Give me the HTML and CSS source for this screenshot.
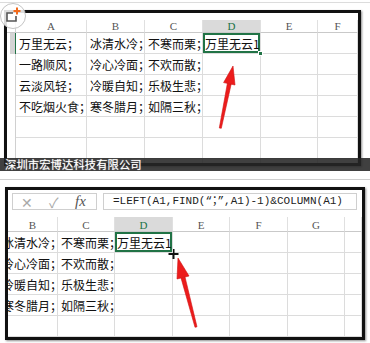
FILE: index.html
```html
<!DOCTYPE html>
<html lang="zh-cn">

<head>
  <meta charset="UTF-8">
  <meta name="viewport" content="width=device-width, initial-scale=1.0">
  <title>LEFT FIND COLUMN</title>
  <link rel="stylesheet" href="styles.css">
</head>

<body>
  <div class="rule first"></div>

  <div class="top-wrap">
    <div class="shot top-shot">
      <div class="top-space"></div>
      <div class="sheet sheet-top">
        <div class="hd corner"></div>
        <div class="hd">A</div>
        <div class="hd">B</div>
        <div class="hd">C</div>
        <div class="hd sel">D</div>
        <div class="hd">E</div>
        <div class="hd">F</div>

        <div class="rh active"></div>
        <div class="c">万里无云；</div>
        <div class="c">冰清水冷；</div>
        <div class="c">不寒而栗；</div>
        <div class="c cur">万里无云1<span class="handle"></span></div>
        <div class="c"></div>
        <div class="c"></div>

        <div class="rh"></div>
        <div class="c">一路顺风；</div>
        <div class="c">冷心冷面；</div>
        <div class="c spill">不欢而散；</div>
        <div class="c"></div>
        <div class="c"></div>
        <div class="c"></div>

        <div class="rh"></div>
        <div class="c">云淡风轻；</div>
        <div class="c">冷暖自知；</div>
        <div class="c spill">乐极生悲；</div>
        <div class="c"></div>
        <div class="c"></div>
        <div class="c"></div>

        <div class="rh"></div>
        <div class="c">不吃烟火食；</div>
        <div class="c">寒冬腊月；</div>
        <div class="c spill">如隔三秋；</div>
        <div class="c"></div>
        <div class="c"></div>
        <div class="c"></div>

        <div class="rh"></div>
        <div class="c"></div>
        <div class="c"></div>
        <div class="c"></div>
        <div class="c"></div>
        <div class="c"></div>
        <div class="c"></div>

        <div class="rh"></div>
        <div class="c"></div>
        <div class="c"></div>
        <div class="c"></div>
        <div class="c"></div>
        <div class="c"></div>
        <div class="c"></div>

        <div class="rh"></div>
        <div class="c"></div>
        <div class="c"></div>
        <div class="c"></div>
        <div class="c"></div>
        <div class="c"></div>
        <div class="c"></div>
      </div>
    </div>
    <div class="caption">深圳市宏博达科技有限公司</div>
  </div>

  <div class="rule second"></div>

  <div class="shot bottom-shot">
    <div class="fbar">
      <div class="fbtns">
        <span class="fb-x">&#x2715;</span>
        <span class="fb-ok">&#x2713;</span>
        <span class="fb-fx">fx</span>
      </div>
      <div class="fbox">=LEFT(A1,FIND(“；”,A1)-1)&amp;COLUMN(A1)</div>
    </div>
    <div class="sheet sheet-bottom">
      <div class="hd">B</div>
      <div class="hd">C</div>
      <div class="hd sel">D</div>
      <div class="hd">E</div>
      <div class="hd">F</div>
      <div class="hd">G</div>
      <div class="hd"></div>

      <div class="c right"><span>冰清水冷；</span></div>
      <div class="c">不寒而栗；</div>
      <div class="c cur">万里无云1</div>
      <div class="c"></div>
      <div class="c"></div>
      <div class="c"></div>
      <div class="c"></div>

      <div class="c right"><span>冷心冷面；</span></div>
      <div class="c">不欢而散；</div>
      <div class="c"></div>
      <div class="c"></div>
      <div class="c"></div>
      <div class="c"></div>
      <div class="c"></div>

      <div class="c right"><span>冷暖自知；</span></div>
      <div class="c">乐极生悲；</div>
      <div class="c"></div>
      <div class="c"></div>
      <div class="c"></div>
      <div class="c"></div>
      <div class="c"></div>

      <div class="c right"><span>寒冬腊月；</span></div>
      <div class="c">如隔三秋；</div>
      <div class="c"></div>
      <div class="c"></div>
      <div class="c"></div>
      <div class="c"></div>
      <div class="c"></div>

      <div class="c"></div>
      <div class="c"></div>
      <div class="c"></div>
      <div class="c"></div>
      <div class="c"></div>
      <div class="c"></div>
      <div class="c"></div>

      <div class="c"></div>
      <div class="c"></div>
      <div class="c"></div>
      <div class="c"></div>
      <div class="c"></div>
      <div class="c"></div>
      <div class="c"></div>
    </div>
  </div>

  <!-- annotations drawn over the screenshots -->
  <svg class="marks" width="370" height="343" viewBox="0 0 370 343">
    <circle cx="13" cy="16" r="12.5" fill="rgba(255,255,255,0.85)" stroke="#c4c4c4" stroke-width="1"/>
    <path d="M13 13 H7 V21 H16 V16" fill="none" stroke="#555" stroke-width="1.6"/>
    <path d="M17 7.5 V14.5 M13.5 11 H20.5" stroke="#f26a1b" stroke-width="2"/>

    <g class="arrow">
      <polygon points="219.3,128 221.3,128.3 231.2,84 227.4,83.2"/>
      <polygon points="233,66 235,85 223.6,82.6"/>
    </g>
    <g class="arrow">
      <polygon points="195,327.3 197,326.8 185,276.9 181,277.9"/>
      <polygon points="178,258 189,276 177,279"/>
    </g>

    <path d="M173.5 249 V259 M168.5 254 H178.5" stroke="#111" stroke-width="2"/>
  </svg>
</body>

</html>
```

FILE: styles.css
```css
html,
body {
  margin: 0;
  width: 370px;
  height: 343px;
  overflow: hidden;
  background: #fff;
  font-family: "Noto Sans CJK SC", sans-serif;
}

.rule {
  height: 1px;
  background: #dcdcdc;
}

.rule.first {
  margin-top: 2px;
}

.rule.second {
  margin-top: 8px;
  background: #cfcfcf;
}

.top-wrap {
  position: relative;
  height: 168px;
  padding: 7px 0 0 4px;
  box-sizing: border-box;
}

.shot {
  box-sizing: border-box;
  border: 3px solid #111;
  overflow: hidden;
  background: #fff;
  box-shadow: 1px 1px 2px rgba(0, 0, 0, 0.45);
}

.top-shot {
  width: 357px;
  height: 156px;
}

.top-space {
  height: 7px;
}

.caption {
  position: absolute;
  left: 0;
  right: 0;
  top: 155px;
  height: 13px;
  line-height: 13px;
  padding-left: 5px;
  background: rgba(38, 38, 38, 0.88);
  color: #fff;
  font-size: 11.3px;
  text-shadow: 0 0 1px rgba(255, 255, 255, 0.7);
  letter-spacing: 0.1px;
}

.sheet {
  display: grid;
  font-size: 12px;
  color: #111;
}

.sheet-top {
  grid-template-columns: 9px 71px 58px 58px 58px 57px 1fr;
  grid-template-rows: 13px repeat(7, 21px);
}

.bottom-shot {
  width: 360px;
  height: 153px;
  margin: 7px 0 0 5px;
}

.sheet-bottom {
  grid-template-columns: 50px 57px 58px 57px 58px 57px 1fr;
  grid-template-rows: 15px repeat(6, 21px);
}

.hd {
  font-family: "Liberation Serif", serif;
  font-size: 11px;
  color: #555;
  text-align: center;
  line-height: 13px;
  border-right: 1px solid #e0e0e0;
  border-bottom: 1px solid #c9c9c9;
}

.sheet-bottom .hd {
  line-height: 16px;
}

.hd.sel {
  background: #dadada;
  color: #217346;
}

.hd.corner {
  border-right: 1px solid #d0d0d0;
}

.rh {
  border-right: 1px solid #d0d0d0;
}

.rh.active {
  background: linear-gradient(to right, #fff 0, #fff 3px, #d4d4d4 3px);
  border-right: 1px solid #217346;
}

.c {
  position: relative;
  display: flex;
  align-items: center;
  padding-left: 3px;
  white-space: nowrap;
  overflow: hidden;
  border-right: 1px solid #dcdcdc;
  border-bottom: 1px solid #dcdcdc;
}

.c.spill {
  overflow: visible;
  z-index: 1;
}

.c.right {
  justify-content: flex-end;
  padding-left: 0;
}

.c.right span {
  flex-shrink: 0;
  margin-right: -5px;
}

.c.cur {
  overflow: visible;
  padding-left: 2px;
  box-shadow: inset 0 0 0 2px #217346;
  z-index: 2;
}

.handle {
  position: absolute;
  right: -3px;
  bottom: -3px;
  width: 5px;
  height: 5px;
  background: #217346;
  border: 1px solid #fff;
  box-sizing: border-box;
}

.fbar {
  display: flex;
  gap: 6px;
  height: 27px;
  padding: 3px 5px 0 4px;
  box-sizing: border-box;
}

.fbtns {
  display: flex;
  align-items: center;
  width: 85px;
  height: 17px;
  box-sizing: border-box;
  border: 1px solid #cfcfcf;
  padding-left: 8px;
  color: #a9a9a9;
}

.fb-x {
  font-size: 14px;
  width: 28px;
}

.fb-ok {
  font-size: 14px;
  width: 26px;
}

.fb-fx {
  font-family: "Liberation Serif", serif;
  font-style: italic;
  font-size: 15px;
  color: #555;
}

.fbox {
  flex: 1;
  height: 17px;
  box-sizing: border-box;
  border: 1px solid #cfcfcf;
  padding-left: 9px;
  font-family: "Liberation Mono", "Noto Sans CJK SC", monospace;
  font-size: 11px;
  letter-spacing: 0;
  line-height: 15px;
  color: #222;
  white-space: nowrap;
  overflow: hidden;
}

.marks {
  position: absolute;
  left: 0;
  top: 0;
  pointer-events: none;
}

.arrow polygon {
  fill: #ec1c1c;
  stroke: #d01010;
  stroke-width: 0.6;
  stroke-linejoin: round;
}
```
